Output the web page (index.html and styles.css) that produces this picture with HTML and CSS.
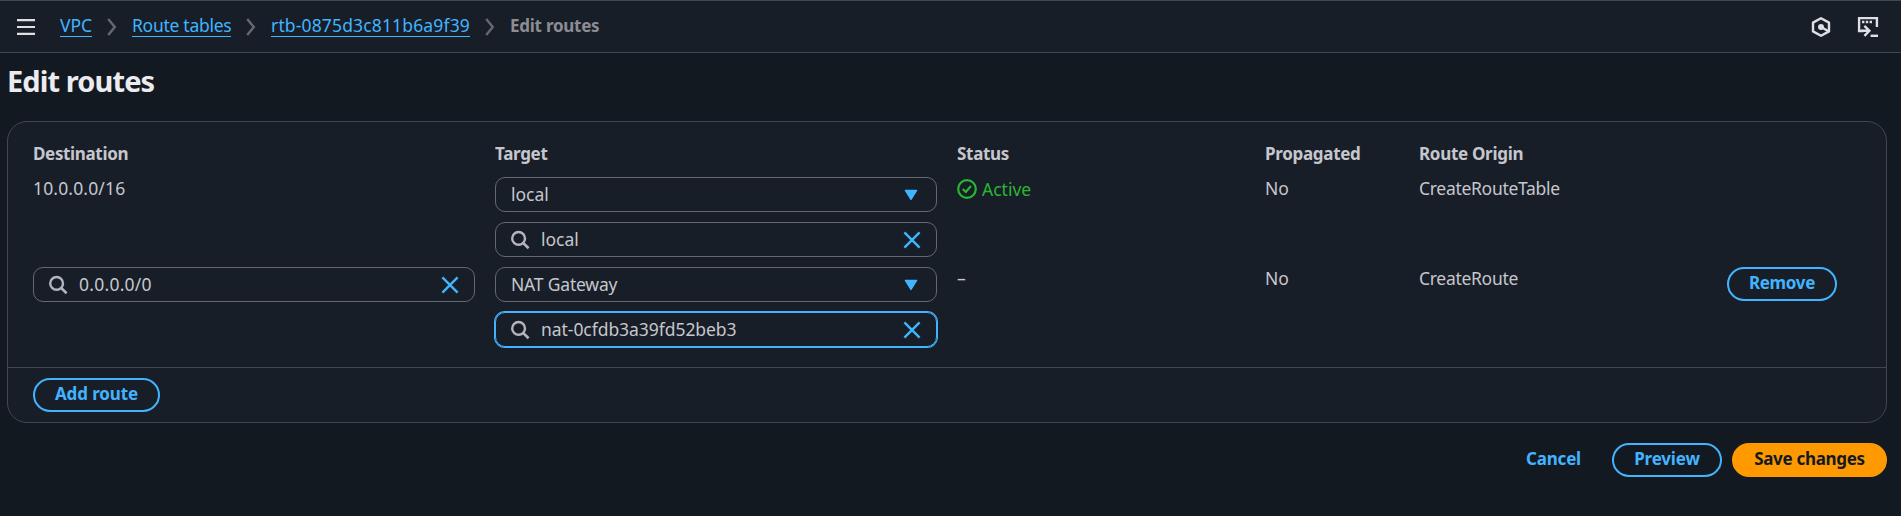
FILE: index.html
```html
<!DOCTYPE html>
<html lang="en">
<head>
<meta charset="utf-8">
<title>Edit routes</title>
<link rel="stylesheet" href="styles.css">
</head>
<body>
<svg class="defs" aria-hidden="true">
  <symbol id="chevron" viewBox="0 0 20 20"><path d="M6.2 2l6.6 8-6.6 8" fill="none" stroke="currentColor" stroke-width="2.4"/></symbol>
  <symbol id="search" viewBox="0 0 20 20"><circle cx="8.6" cy="8.4" r="6.4" fill="none" stroke="currentColor" stroke-width="2.4"/><path d="M13.2 13l5.4 5.2" stroke="currentColor" stroke-width="2.6"/></symbol>
  <symbol id="close" viewBox="0 0 20 20"><path d="M2.4 2.4l15.2 15.2M17.6 2.4L2.4 17.6" stroke="currentColor" stroke-width="2.4"/></symbol>
  <symbol id="caret" viewBox="0 0 20 20"><path d="M4.4 5.4h11.2L10 14.4z" fill="currentColor" stroke="currentColor" stroke-width="1.4" stroke-linejoin="round"/></symbol>
</svg>

<header class="topbar">
  <svg class="menu" viewBox="0 0 18 16"><path d="M0 1.2h18M0 8h18M0 14.8h18" stroke="currentColor" stroke-width="2.2"/></svg>
  <nav class="crumbs">
    <a class="crumb crumb-vpc" href="#">VPC</a>
    <svg class="icon sep"><use href="#chevron"/></svg>
    <a class="crumb crumb-tables" href="#">Route tables</a>
    <svg class="icon sep"><use href="#chevron"/></svg>
    <a class="crumb crumb-id" href="#">rtb-0875d3c811b6a9f39</a>
    <svg class="icon sep"><use href="#chevron"/></svg>
    <span class="current">Edit routes</span>
  </nav>
  <div class="tools">
    <svg class="icon" viewBox="0 0 20 20"><path d="M10 1.200l8 4.400v8.800l-8 4.400-8-4.400V5.600z" fill="none" stroke="currentColor" stroke-width="2.400" stroke-linejoin="round"/><circle cx="10" cy="10" r="3" fill="currentColor"/><path d="M10.500 10.300l7 4" stroke="currentColor" stroke-width="2.400"/></svg>
    <svg class="icon" viewBox="0 0 20 20"><path d="M5.400 14H1.100V1.100h17.800V10" fill="none" stroke="currentColor" stroke-width="2.400"/><path d="M4 5h2.400M7.800 5h2.400M11.600 5H14" stroke="currentColor" stroke-width="2.400"/><path d="M3 13.800h8M6.400 8.800l5 5-5 5" fill="none" stroke="currentColor" stroke-width="2.400"/><path d="M12.600 18.800H20" stroke="currentColor" stroke-width="2.400"/></svg>
  </div>
</header>

<main class="page">
  <h1 class="title">Edit routes</h1>
  <section class="panel">
    <div class="routes">
      <div class="row heads">
        <div class="head h-dest">Destination</div>
        <div class="head">Target</div>
        <div class="head">Status</div>
        <div class="head">Propagated</div>
        <div class="head">Route Origin</div>
      </div>
      <div class="row">
        <div class="cell cidr">10.0.0.0/16</div>
        <div class="fields">
          <div class="field"><span class="value">local</span><svg class="icon accent caret"><use href="#caret"/></svg></div>
          <div class="field"><svg class="icon find"><use href="#search"/></svg><span class="value">local</span><svg class="icon accent"><use href="#close"/></svg></div>
        </div>
        <div class="cell status"><svg class="icon" viewBox="0 0 20 20"><circle cx="10" cy="10" r="8.800" fill="none" stroke="currentColor" stroke-width="2.200"/><path d="M5.800 10l3 3 5.200-6" fill="none" stroke="currentColor" stroke-width="2.200"/></svg><span>Active</span></div>
        <div class="cell">No</div>
        <div class="cell origin">CreateRouteTable</div>
      </div>
      <div class="row">
        <div class="fields">
          <div class="field"><svg class="icon find"><use href="#search"/></svg><span class="value ip">0.0.0.0/0</span><svg class="icon accent"><use href="#close"/></svg></div>
        </div>
        <div class="fields">
          <div class="field"><span class="value gateway">NAT Gateway</span><svg class="icon accent caret"><use href="#caret"/></svg></div>
          <div class="field focused"><svg class="icon find"><use href="#search"/></svg><span class="value nat">nat-0cfdb3a39fd52beb3</span><svg class="icon accent"><use href="#close"/></svg></div>
        </div>
        <div class="cell">–</div>
        <div class="cell">No</div>
        <div class="cell origin">CreateRoute</div>
        <div><button class="btn remove">Remove</button></div>
      </div>
    </div>
    <div class="footer"><button class="btn add">Add route</button></div>
  </section>
  <div class="actions">
    <button class="btn link">Cancel</button>
    <button class="btn preview">Preview</button>
    <button class="btn primary">Save changes</button>
  </div>
</main>
</body>
</html>
```

FILE: styles.css
```css
* { box-sizing: border-box; }
body {
  margin: 0;
  height: 516px;
  overflow: hidden;
  background: #131920;
  color: #c6c6cd;
  font: 17.5px/25px "Noto Sans", "Open Sans", sans-serif;
}
.defs { position: absolute; width: 0; height: 0; }
.icon { flex: none; width: 20px; height: 20px; display: block; overflow: visible; }

.topbar {
  display: flex;
  align-items: center;
  height: 53px;
  padding: 0 23px 0 17px;
  background: #181e27;
  border-top: 1px solid #424650;
  border-bottom: 1px solid #424650;
}
.menu { width: 18px; height: 16px; color: #dedee3; margin-right: 25px; }
.crumbs { display: flex; align-items: center; gap: 10px; height: 25px; margin-bottom: 1px; }
.crumb {
  color: #42b4ff;
  text-decoration: none;
  height: 23px;
  line-height: 23px;
  border-bottom: 1px solid #42b4ff;
  margin-top: -1px;
  white-space: nowrap;
}
.crumb-vpc { width: 32px; }
.crumb-tables { width: 99px; letter-spacing: -.28px; }
.crumb-id { width: 199px; letter-spacing: .15px; }
.sep { color: #656871; margin-top: 2px; }
.current { color: #8c8c94; font-weight: 700; font-size: 17px; letter-spacing: -.25px; line-height: 23px; margin-top: -1px; }
.tools { display: flex; gap: 27px; margin-left: auto; color: #dedee3; }

.page { padding: 10px 14px 0 7px; }
.title { margin: 0; color: #ebebf0; font-size: 29px; line-height: 36px; letter-spacing: -.9px; font-weight: 700; }
.panel {
  margin-top: 22px;
  height: 302px;
  background: #181e27;
  border: 1px solid #424650;
  border-radius: 20px;
}
.routes { height: 245px; padding: 20px 25px 0; }
.row {
  display: grid;
  grid-template-columns: 442px 442px 288px 134px 288px 134px;
  column-gap: 20px;
  height: 90px;
}
.heads { height: 35px; }
.head { font-weight: 700; font-size: 17px; line-height: 23px; letter-spacing: -.3px; white-space: nowrap; }
.h-dest { letter-spacing: -.35px; }
.cell { white-space: nowrap; line-height: 23px; }
.origin { letter-spacing: -.3px; }
.cidr { letter-spacing: .15px; }
.status { display: flex; align-items: center; gap: 5px; height: 24px; color: #2bb534; }
.fields { display: flex; flex-direction: column; gap: 10px; }
.field {
  display: flex;
  align-items: center;
  height: 35px;
  padding: 0 14px 0 15px;
  border: 1px solid #656871;
  border-radius: 10px;
  white-space: nowrap;
}
.find { color: #b4b4bb; margin: 0 11px 0 -1px; }
.value { flex: 1; line-height: 24px; margin-bottom: 2px; }
.ip { letter-spacing: .25px; }
.gateway { letter-spacing: -.2px; }
.nat { letter-spacing: -.05px; }
.accent { color: #42b4ff; }
.caret { margin-right: 1px; }
.focused { border-color: #42b4ff; box-shadow: 0 0 0 1px #42b4ff; }

.footer { border-top: 1px solid #424650; padding: 10px 25px; }
.btn {
  display: block;
  height: 34px;
  padding: 0 0 3px;
  border: 2px solid #42b4ff;
  border-radius: 17px;
  background: transparent;
  color: #42b4ff;
  font: 700 17px/27px "Noto Sans", "Open Sans", sans-serif;
  white-space: nowrap;
  text-align: center;
}
.add { width: 127px; letter-spacing: -.1px; }
.remove { width: 110px; letter-spacing: -.3px; }
.preview { width: 110px; letter-spacing: -.15px; }
.primary { width: 155px; background: #ff9900; border-color: #ff9900; color: #131920; letter-spacing: -.3px; }
.link { width: 97px; border-color: transparent; letter-spacing: -.2px; }
.actions { display: flex; justify-content: flex-end; gap: 10px; margin-top: 20px; }
```
